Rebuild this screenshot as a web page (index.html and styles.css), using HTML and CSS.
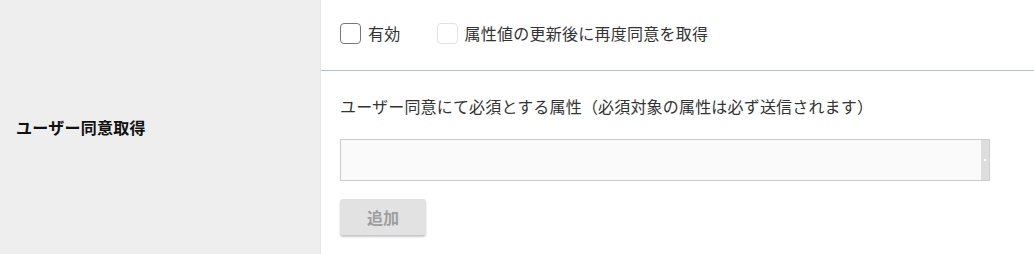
FILE: index.html
```html
<!DOCTYPE html>
<html lang="ja">
<head>
<meta charset="utf-8">
<link rel="stylesheet" href="styles.css">
</head>
<body>
<div class="row">
  <div class="label-cell">
    <span class="row-title">ユーザー同意取得</span>
  </div>
  <div class="content-cell">
    <div class="options">
      <label class="check">
        <span class="box"></span>
        <span class="check-text">有効</span>
      </label>
      <label class="check disabled">
        <span class="box"></span>
        <span class="check-text">属性値の更新後に再度同意を取得</span>
      </label>
    </div>
    <div class="attrs">
      <div class="attrs-title">ユーザー同意にて必須とする属性（必須対象の属性は必ず送信されます）</div>
      <div class="list-box">
        <div class="list-scroll"><span class="scroll-dot"></span></div>
      </div>
      <button class="add-btn" type="button" disabled>追加</button>
    </div>
  </div>
</div>
</body>
</html>
```

FILE: styles.css
```css
html, body {
  margin: 0;
  padding: 0;
  background: #ffffff;
}

body {
  font-family: "Noto Sans CJK JP", "Noto Sans", sans-serif;
  color: #333333;
}

.row {
  display: flex;
  height: 254px;
}

.label-cell {
  width: 321px;
  flex: none;
  background: #eeeeee;
  border-right: 1px solid #e4e4e4;
  display: flex;
  align-items: center;
  padding-left: 16px;
  box-sizing: border-box;
}

.row-title {
  font-size: 16px;
  font-weight: 700;
  color: #111111;
  line-height: 24px;
  letter-spacing: 0.25px;
}

.content-cell {
  flex: 1;
  display: flex;
  flex-direction: column;
}

.options {
  height: 71px;
  box-sizing: border-box;
  padding: 21px 0 0 19px;
  border-bottom: 1px solid #b0bec5;
  display: flex;
  align-items: flex-start;
}

.check {
  display: flex;
  align-items: center;
  height: 24px;
  margin-right: 36px;
}

.box {
  width: 19px;
  height: 19px;
  border: 1px solid #777777;
  border-radius: 4px;
  box-sizing: content-box;
  margin-right: 7px;
  background: #ffffff;
}

.check.disabled .box {
  border-color: #e2e2e2;
}

.check-text {
  font-size: 16px;
  line-height: 24px;
  color: #333333;
  letter-spacing: 0.25px;
}

.attrs {
  padding: 23px 0 0 19px;
}

.attrs-title {
  font-size: 16px;
  line-height: 24px;
  color: #333333;
  letter-spacing: 0.18px;
}

.list-box {
  margin-top: 21px;
  width: 650px;
  height: 42px;
  box-sizing: border-box;
  border: 1px solid #cccccc;
  background: #fafafa;
  display: flex;
  justify-content: flex-end;
}

.list-scroll {
  width: 8px;
  height: 100%;
  background: #dddddd;
  display: flex;
  align-items: center;
  justify-content: center;
}

.scroll-dot {
  width: 2px;
  height: 2px;
  background: #ffffff;
}

.add-btn {
  margin-top: 18px;
  width: 86px;
  height: 36px;
  border: none;
  border-radius: 3px;
  background: #e2e2e2;
  color: #9e9e9e;
  font-family: "Noto Sans CJK JP", "Noto Sans", sans-serif;
  font-size: 16px;
  font-weight: 700;
  box-shadow: 0 2px 2px rgba(0, 0, 0, 0.22);
  padding: 0;
  display: block;
}
```
